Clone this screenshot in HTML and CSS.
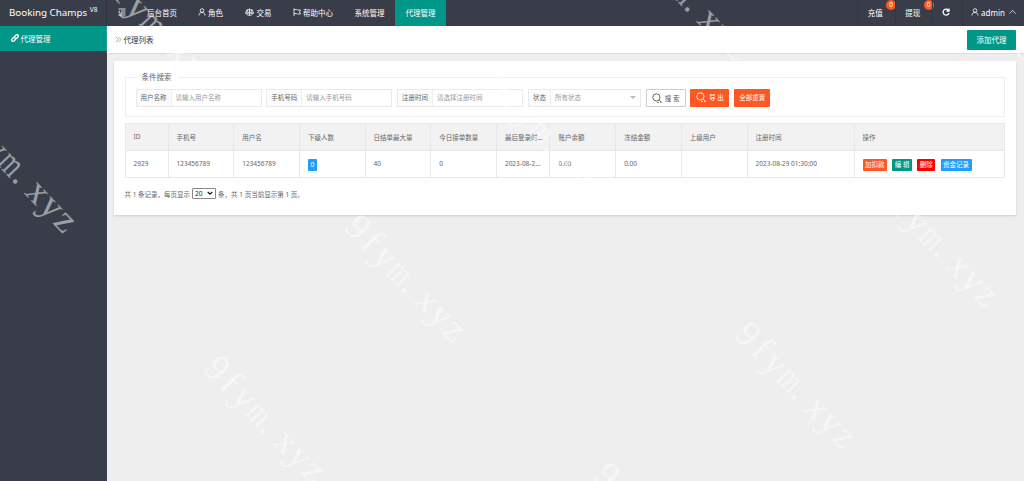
FILE: index.html
```html
<!DOCTYPE html>
<html lang="zh-CN">
<head>
    <meta charset="UTF-8">
    <meta name="viewport" content="width=device-width, initial-scale=1.0">
    <title>代理列表</title>
    <link rel="stylesheet" href="styles.css">
</head>
<body>
    <svg class="defs" width="0" height="0">
        <symbol id="user" viewBox="0 0 16 16"><circle cx="8" cy="5" r="3.6"/><path d="M2 15c0-4 2-6 6-6s6 2 6 6"/></symbol>
        <symbol id="search" viewBox="0 0 16 16"><circle cx="7" cy="7" r="5.8"/><path d="M11.500 11.500l3.500 3M8 15h3M13 15h2"/></symbol>
        <symbol id="mark" viewBox="0 0 160 40">
            <text y="30" x="0 23 40">9fy</text>
            <text y="30" x="61" textLength="20" lengthAdjust="spacingAndGlyphs">m</text>
            <text y="30" x="82 101 121 142">.xyz</text>
        </symbol>
    </svg>

    <div class="header">
        <div class="logo">Booking Champs <sup>V8</sup></div>
        <div class="nav">
            <a class="menu-toggle"><svg class="icon" viewBox="0 0 16 16"><path d="M1 2h14M6 6h9M6 10h9M1 14h14M4 5.500L1 8l3 2.500"/></svg></a>
            <a class="home">后台首页</a>
            <a class="role"><svg class="icon"><use href="#user"/></svg>角色</a>
            <a class="trade"><svg class="icon wide" viewBox="0 0 18 16"><path d="M9 1v13M5 14.500h8M3 3.500h12M4 4L1 10h6L4 4M14 4l-3 6h6l-3-6M1 10c1 3 5 3 6 0M11 10c1 3 5 3 6 0"/></svg>交易</a>
            <a class="help"><svg class="icon" viewBox="0 0 16 16"><path d="M2 1v15M2 3h5l2 1h6l-2 4 2 4H9l-2-1H2"/></svg>帮助中心</a>
            <a class="system">系统管理</a>
            <a class="active">代理管理</a>
        </div>
        <div class="account">
            <a class="cash">充值<span class="badge">0</span></a>
            <a class="cash">提现<span class="badge">0</span></a>
            <a class="refresh"><svg class="icon bold" viewBox="0 0 16 16"><path d="M13 4.500A6 6 0 1 0 14 10M14 1v5H9"/></svg></a>
            <a class="admin"><svg class="icon"><use href="#user"/></svg>admin<svg class="icon arrow" viewBox="0 0 16 16"><path d="M1 12l7-8 7 8"/></svg></a>
        </div>
    </div>

    <div class="main">
        <div class="side">
            <a class="side-item"><svg class="icon bold" viewBox="0 0 16 16"><path d="M7 5l3-3c3-2 6 1 4 4l-3 3c-1 1-3 1-4 0M9 11l-3 3c-3 2-6-1-4-4l3-3c1-1 3-1 4 0"/></svg>代理管理</a>
        </div>
        <div class="content">
            <div class="title-bar">
                <svg class="icon" viewBox="0 0 16 16"><path d="M2 2l6 6-6 6M8 2l6 6-6 6"/></svg>
                <span>代理列表</span>
                <button class="add">添加代理</button>
            </div>
            <div class="card">
                <fieldset>
                    <legend>条件搜索</legend>
                    <div class="search">
                        <div class="field"><label>用户名称</label><span>请输入用户名称</span></div>
                        <div class="field"><label>手机号码</label><span>请输入手机号码</span></div>
                        <div class="field"><label>注册时间</label><span>请选择注册时间</span></div>
                        <div class="field status"><label>状态</label><span>所有状态</span><i class="caret"></i></div>
                        <button class="btn plain"><svg class="icon"><use href="#search"/></svg>搜 索</button>
                        <button class="btn export"><svg class="icon"><use href="#search"/></svg>导 出</button>
                        <button class="btn reset">全部重置</button>
                    </div>
                </fieldset>
                <table>
                    <colgroup>
                        <col class="w-id"><col class="w-a"><col class="w-a"><col class="w-a"><col class="w-a"><col class="w-a">
                        <col class="w-login"><col class="w-a"><col class="w-a"><col class="w-a"><col class="w-time"><col>
                    </colgroup>
                    <tr>
                        <th>ID</th><th>手机号</th><th>用户名</th><th>下级人数</th><th>日结单最大量</th><th>今日接单数量</th>
                        <th>最后登录时...</th><th>账户余额</th><th>冻结金额</th><th>上级用户</th><th>注册时间</th><th>操作</th>
                    </tr>
                    <tr>
                        <td>2929</td><td>123456789</td><td>123456789</td><td><span class="tag blue count">0</span></td><td>40</td><td>0</td>
                        <td>2023-08-2...</td><td>0.00</td><td>0.00</td><td></td><td>2023-08-29 01:30:00</td>
                        <td>
                            <div class="actions">
                                <a class="tag orange">加扣款</a><a class="tag green">编 辑</a><a class="tag red">删除</a><a class="tag blue">资金记录</a>
                            </div>
                        </td>
                    </tr>
                </table>
                <div class="pager">共 1 条记录，每页显示 <span class="select">20<svg viewBox="0 0 8 6"><path d="M1 1l3 3 3-3"/></svg></span> 条，共 1 页当前显示第 1 页。</div>
            </div>
        </div>
    </div>

    <!-- diagonal watermark -->
    <svg class="watermark" viewBox="0 0 1024 481">
        <g transform="translate(6 1)">
            <use href="#mark" width="160" height="40" transform="translate(359 207) rotate(46.500)"/>
            <use href="#mark" width="160" height="40" transform="translate(218 348) rotate(46.500)"/>
            <use href="#mark" width="160" height="40" transform="translate(501 66) rotate(46.500)"/>
            <use href="#mark" width="160" height="40" transform="translate(749 314) rotate(46.500)"/>
            <use href="#mark" width="160" height="40" transform="translate(608 455) rotate(46.500)"/>
            <use href="#mark" width="160" height="40" transform="translate(891 172) rotate(46.500)"/>
            <use href="#mark" width="160" height="40" transform="translate(1031 30) rotate(46.500)"/>
            <use href="#mark" width="160" height="40" transform="translate(642 -74) rotate(46.500)"/>
            <use href="#mark" width="160" height="40" transform="translate(-30 98) rotate(46.500)"/>
            <use href="#mark" width="160" height="40" transform="translate(112 -42) rotate(46.500)"/>
        </g>
    </svg>
</body>
</html>
```
FILE: styles.css
```css
* {
    box-sizing: border-box;
}
body {
    margin: 0;
    height: 481px;
    overflow: hidden;
    background-color: #eee;
    font-family: "Noto Sans", "Noto Sans CJK SC", sans-serif;
    font-size: 7.5px;
    color: #333;
}
button {
    font-family: inherit;
    border: none;
    padding: 0;
}
.defs {
    position: absolute;
}
.icon {
    width: 8px;
    height: 8px;
    flex: none;
    fill: none;
    stroke: currentColor;
    stroke-width: 1.6;
}
.icon.wide {
    width: 9px;
}
.icon.bold {
    stroke-width: 2.6;
}

/* header */
.header {
    display: flex;
    height: 26px;
    background-color: #393d49;
    color: #fff;
}
.logo {
    width: 106.500px;
    padding-left: 9px;
    line-height: 25px;
    font-size: 9.8px;
    white-space: nowrap;
    border-right: 1px solid #30343e;
}
.logo sup {
    font-size: 6.5px;
    line-height: 0;
    vertical-align: 4px;
}
.nav, .account {
    display: flex;
}
.header a {
    display: flex;
    align-items: center;
    padding-bottom: 1.500px;
    white-space: nowrap;
    gap: 2px;
}
.menu-toggle {
    width: 30px;
    padding-left: 11px;
}
.home { width: 51.500px; padding-left: 10.500px; }
.role { width: 46px; padding-left: 10px; }
.trade { width: 48px; padding-left: 10.500px; }
.header .trade { gap: 3px; }
.help { width: 62px; padding-left: 11px; }
.system { width: 51px; padding-left: 10.500px; }
.header .active {
    width: 51px;
    justify-content: center;
    background-color: #009688;
}
.account {
    margin-left: auto;
}
.account a {
    position: relative;
    justify-content: center;
    border-left: 1px solid #343843;
}
.cash {
    width: 37.500px;
}
.account .cash {
    padding-right: 2px;
}
.badge {
    position: absolute;
    left: 28px;
    top: 0;
    width: 10px;
    height: 10px;
    line-height: 10px;
    border-radius: 50%;
    background-color: #ff5722;
    font-size: 6.5px;
    text-align: center;
}
.refresh {
    width: 30px;
}
.account .refresh {
    padding-right: 3px;
}
.admin {
    width: 62px;
    font-size: 8px;
}
.arrow {
    margin-left: 2px;
    width: 7px;
}

/* layout */
.main {
    display: flex;
    height: 455px;
}
.side {
    width: 106.500px;
    background-color: #393d49;
}
.side-item {
    display: flex;
    align-items: center;
    gap: 2px;
    height: 24.500px;
    padding-left: 10.500px;
    background-color: #009688;
    color: #fff;
}
.content {
    flex: 1;
}
.title-bar {
    display: flex;
    align-items: center;
    height: 27px;
    padding: 0 8px;
    background-color: #fff;
    box-shadow: 0 1px 1px #ddd;
}
.title-bar span {
    margin-left: 2px;
}
.title-bar .icon {
    stroke: #888;
    width: 7px;
    height: 7px;
}
.add {
    margin-left: auto;
    width: 49px;
    height: 20px;
    border-radius: 1px;
    background-color: #009688;
    color: #fff;
    font-size: 7.5px;
}
.card {
    margin: 7.500px 8.500px 0 7.500px;
    height: 154.500px;
    padding: 10.500px 10.500px 0;
    background-color: #fff;
    box-shadow: 0 1px 2px #ccc;
    color: #666;
    font-size: 6.5px;
}

/* search form */
fieldset {
    margin: 0;
    height: 46px;
    padding: 0 10px;
    border: 1px solid #eee;
}
legend {
    padding: 0 6px;
    height: 13px;
    line-height: 13px;
    font-size: 7.5px;
}
.search {
    display: flex;
    gap: 4.800px;
    padding-top: 5px;
}
.field {
    display: flex;
    width: 126px;
    height: 17.500px;
    line-height: 15.500px;
    border: 1px solid #eaeaea;
    white-space: nowrap;
}
.field label {
    width: 35px;
    text-align: center;
    background-color: #fbfbfb;
    border-right: 1px solid #eee;
}
.field span {
    padding-left: 4px;
    color: #999;
}
.status {
    width: 113px;
}
.status label {
    width: 22px;
}
.caret {
    margin: 6px 4px 0 auto;
    width: 0;
    height: 0;
    border: 3.500px solid transparent;
    border-top-color: #bbb;
}
.btn {
    display: flex;
    align-items: center;
    justify-content: center;
    gap: 3px;
    height: 17.500px;
    border-radius: 1px;
    background-color: #ff5722;
    color: #fff;
    font-size: 6.5px;
}
.btn .icon {
    width: 10px;
    height: 10px;
    stroke-width: 1.4;
}
.plain {
    width: 40px;
    border: 1px solid #ccc;
    background-color: #fff;
    color: #555;
}
.export {
    width: 39px;
}
.reset {
    width: 36px;
}
.export, .reset {
    padding-bottom: 1.500px;
}

/* table */
table {
    width: 880.500px;
    margin-top: 5.500px;
    table-layout: fixed;
    border-collapse: collapse;
}
th, td {
    height: 27.300px;
    padding: 0 0 0 8px;
    border: 1px solid #e8e8e8;
    text-align: left;
    font-weight: normal;
    white-space: nowrap;
    overflow: hidden;
    text-overflow: ellipsis;
}
th {
    background-color: #f2f2f2;
}
.w-id { width: 43px; }
.w-a { width: 65.700px; }
.w-login { width: 53.500px; }
.w-time { width: 107px; }
.tag {
    display: inline-block;
    height: 12px;
    line-height: 12px;
    padding: 0 2.500px;
    border-radius: 1px;
    color: #fff;
    vertical-align: middle;
}
.count {
    margin-top: 2px;
}
.actions {
    display: flex;
    gap: 5.300px;
    padding-top: 2px;
}
.blue { background-color: #1e9fff; }
.orange { background-color: #ff5722; }
.green { background-color: #009688; }
.red { background-color: #f00; }

.pager {
    display: flex;
    align-items: center;
    gap: 2px;
    margin-top: 9.500px;
    height: 12px;
}
.select {
    display: flex;
    align-items: center;
    justify-content: space-between;
    width: 24px;
    height: 11px;
    padding: 0 2px;
    border: 1px solid #888;
    border-radius: 1px;
    color: #222;
}
.select svg {
    width: 6px;
    height: 5px;
    fill: none;
    stroke: #111;
    stroke-width: 1.6;
}

.watermark {
    position: absolute;
    left: 0;
    top: 0;
    width: 1024px;
    height: 481px;
    pointer-events: none;
    fill: #fff;
    opacity: 0.5;
    font-family: "Liberation Serif", serif;
    font-size: 37px;
}
```
